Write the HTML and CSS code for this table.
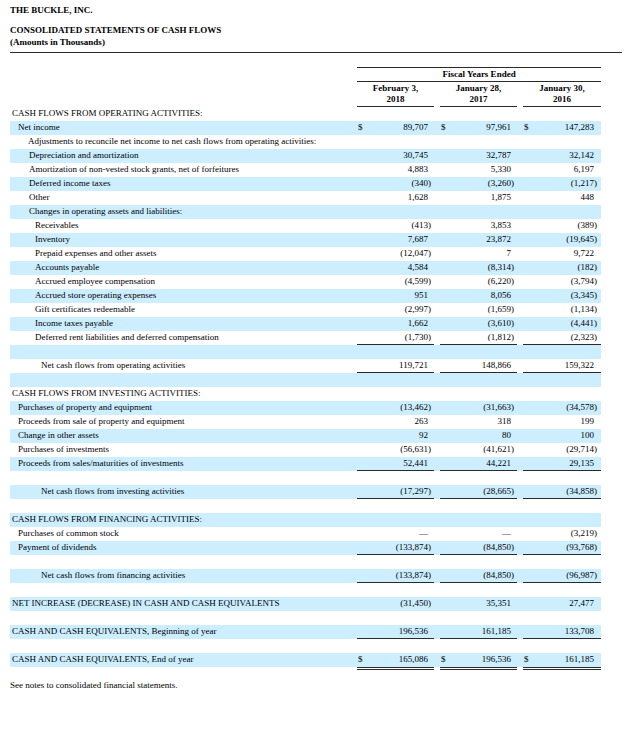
FILE: index.html
```html
<!DOCTYPE html>
<html lang="en">
<head>
<meta charset="utf-8">
<title>The Buckle, Inc. - Consolidated Statements of Cash Flows</title>
<link rel="stylesheet" href="styles.css">
</head>
<body>
<div class="page">
  <div class="company">THE BUCKLE, INC.</div>
  <div class="titles">
    <div>CONSOLIDATED STATEMENTS OF CASH FLOWS</div>
    <div>(Amounts in Thousands)</div>
  </div>

  <table class="cf">
    <colgroup>
      <col class="w-label">
      <col class="w-cur"><col class="w-num"><col class="w-par"><col class="w-gap">
      <col class="w-cur"><col class="w-num"><col class="w-par"><col class="w-gap">
      <col class="w-cur"><col class="w-num"><col class="w-par3">
    </colgroup>
    <thead>
      <tr>
        <td></td>
        <td colspan="11" class="fy">Fiscal Years Ended</td>
      </tr>
      <tr>
        <td></td>
        <td colspan="3" class="dt">February 3,<br>2018</td>
        <td></td>
        <td colspan="3" class="dt">January 28,<br>2017</td>
        <td></td>
        <td colspan="3" class="dt">January 30,<br>2016</td>
      </tr>
    </thead>
    <tbody>
      <tr><td class="l0">CASH FLOWS FROM OPERATING ACTIVITIES:</td><td colspan="11"></td></tr>
      <tr class="b"><td class="l1">Net income</td><td class="cur">$</td><td class="num">89,707</td><td class="par"></td><td></td><td class="cur">$</td><td class="num">97,961</td><td class="par"></td><td></td><td class="cur">$</td><td class="num">147,283</td><td class="par"></td></tr>
      <tr><td class="l2a">Adjustments to reconcile net income to net cash flows from operating activities:</td><td colspan="11"></td></tr>
      <tr class="b"><td class="l2">Depreciation and amortization</td><td class="cur"></td><td class="num">30,745</td><td class="par"></td><td></td><td class="cur"></td><td class="num">32,787</td><td class="par"></td><td></td><td class="cur"></td><td class="num">32,142</td><td class="par"></td></tr>
      <tr><td class="l2">Amortization of non-vested stock grants, net of forfeitures</td><td class="cur"></td><td class="num">4,883</td><td class="par"></td><td></td><td class="cur"></td><td class="num">5,330</td><td class="par"></td><td></td><td class="cur"></td><td class="num">6,197</td><td class="par"></td></tr>
      <tr class="b"><td class="l2">Deferred income taxes</td><td class="cur"></td><td class="num">(340</td><td class="par">)</td><td></td><td class="cur"></td><td class="num">(3,260</td><td class="par">)</td><td></td><td class="cur"></td><td class="num">(1,217</td><td class="par">)</td></tr>
      <tr><td class="l2">Other</td><td class="cur"></td><td class="num">1,628</td><td class="par"></td><td></td><td class="cur"></td><td class="num">1,875</td><td class="par"></td><td></td><td class="cur"></td><td class="num">448</td><td class="par"></td></tr>
      <tr class="b"><td class="l2">Changes in operating assets and liabilities:</td><td colspan="11"></td></tr>
      <tr><td class="l3">Receivables</td><td class="cur"></td><td class="num">(413</td><td class="par">)</td><td></td><td class="cur"></td><td class="num">3,853</td><td class="par"></td><td></td><td class="cur"></td><td class="num">(389</td><td class="par">)</td></tr>
      <tr class="b"><td class="l3">Inventory</td><td class="cur"></td><td class="num">7,687</td><td class="par"></td><td></td><td class="cur"></td><td class="num">23,872</td><td class="par"></td><td></td><td class="cur"></td><td class="num">(19,645</td><td class="par">)</td></tr>
      <tr><td class="l3">Prepaid expenses and other assets</td><td class="cur"></td><td class="num">(12,047</td><td class="par">)</td><td></td><td class="cur"></td><td class="num">7</td><td class="par"></td><td></td><td class="cur"></td><td class="num">9,722</td><td class="par"></td></tr>
      <tr class="b"><td class="l3">Accounts payable</td><td class="cur"></td><td class="num">4,584</td><td class="par"></td><td></td><td class="cur"></td><td class="num">(8,314</td><td class="par">)</td><td></td><td class="cur"></td><td class="num">(182</td><td class="par">)</td></tr>
      <tr><td class="l3">Accrued employee compensation</td><td class="cur"></td><td class="num">(4,599</td><td class="par">)</td><td></td><td class="cur"></td><td class="num">(6,220</td><td class="par">)</td><td></td><td class="cur"></td><td class="num">(3,794</td><td class="par">)</td></tr>
      <tr class="b"><td class="l3">Accrued store operating expenses</td><td class="cur"></td><td class="num">951</td><td class="par"></td><td></td><td class="cur"></td><td class="num">8,056</td><td class="par"></td><td></td><td class="cur"></td><td class="num">(3,345</td><td class="par">)</td></tr>
      <tr><td class="l3">Gift certificates redeemable</td><td class="cur"></td><td class="num">(2,997</td><td class="par">)</td><td></td><td class="cur"></td><td class="num">(1,659</td><td class="par">)</td><td></td><td class="cur"></td><td class="num">(1,134</td><td class="par">)</td></tr>
      <tr class="b"><td class="l3">Income taxes payable</td><td class="cur"></td><td class="num">1,662</td><td class="par"></td><td></td><td class="cur"></td><td class="num">(3,610</td><td class="par">)</td><td></td><td class="cur"></td><td class="num">(4,441</td><td class="par">)</td></tr>
      <tr class="u"><td class="l3">Deferred rent liabilities and deferred compensation</td><td class="cur"></td><td class="num">(1,730</td><td class="par">)</td><td></td><td class="cur"></td><td class="num">(1,812</td><td class="par">)</td><td></td><td class="cur"></td><td class="num">(2,323</td><td class="par">)</td></tr>
      <tr class="b"><td colspan="12"></td></tr>
      <tr class="u"><td class="lt">Net cash flows from operating activities</td><td class="cur"></td><td class="num">119,721</td><td class="par"></td><td></td><td class="cur"></td><td class="num">148,866</td><td class="par"></td><td></td><td class="cur"></td><td class="num">159,322</td><td class="par"></td></tr>
      <tr class="b"><td colspan="12"></td></tr>
      <tr><td class="l0">CASH FLOWS FROM INVESTING ACTIVITIES:</td><td colspan="11"></td></tr>
      <tr class="b"><td class="l1">Purchases of property and equipment</td><td class="cur"></td><td class="num">(13,462</td><td class="par">)</td><td></td><td class="cur"></td><td class="num">(31,663</td><td class="par">)</td><td></td><td class="cur"></td><td class="num">(34,578</td><td class="par">)</td></tr>
      <tr><td class="l1">Proceeds from sale of property and equipment</td><td class="cur"></td><td class="num">263</td><td class="par"></td><td></td><td class="cur"></td><td class="num">318</td><td class="par"></td><td></td><td class="cur"></td><td class="num">199</td><td class="par"></td></tr>
      <tr class="b"><td class="l1">Change in other assets</td><td class="cur"></td><td class="num">92</td><td class="par"></td><td></td><td class="cur"></td><td class="num">80</td><td class="par"></td><td></td><td class="cur"></td><td class="num">100</td><td class="par"></td></tr>
      <tr><td class="l1">Purchases of investments</td><td class="cur"></td><td class="num">(56,631</td><td class="par">)</td><td></td><td class="cur"></td><td class="num">(41,621</td><td class="par">)</td><td></td><td class="cur"></td><td class="num">(29,714</td><td class="par">)</td></tr>
      <tr class="b u"><td class="l1">Proceeds from sales/maturities of investments</td><td class="cur"></td><td class="num">52,441</td><td class="par"></td><td></td><td class="cur"></td><td class="num">44,221</td><td class="par"></td><td></td><td class="cur"></td><td class="num">29,135</td><td class="par"></td></tr>
      <tr><td colspan="12"></td></tr>
      <tr class="b u"><td class="lt">Net cash flows from investing activities</td><td class="cur"></td><td class="num">(17,297</td><td class="par">)</td><td></td><td class="cur"></td><td class="num">(28,665</td><td class="par">)</td><td></td><td class="cur"></td><td class="num">(34,858</td><td class="par">)</td></tr>
      <tr><td colspan="12"></td></tr>
      <tr class="b"><td class="l0">CASH FLOWS FROM FINANCING ACTIVITIES:</td><td colspan="11"></td></tr>
      <tr><td class="l1">Purchases of common stock</td><td class="cur"></td><td class="num dash">—</td><td class="par"></td><td></td><td class="cur"></td><td class="num dash">—</td><td class="par"></td><td></td><td class="cur"></td><td class="num">(3,219</td><td class="par">)</td></tr>
      <tr class="b u"><td class="l1">Payment of dividends</td><td class="cur"></td><td class="num">(133,874</td><td class="par">)</td><td></td><td class="cur"></td><td class="num">(84,850</td><td class="par">)</td><td></td><td class="cur"></td><td class="num">(93,768</td><td class="par">)</td></tr>
      <tr><td colspan="12"></td></tr>
      <tr class="b u"><td class="lt">Net cash flows from financing activities</td><td class="cur"></td><td class="num">(133,874</td><td class="par">)</td><td></td><td class="cur"></td><td class="num">(84,850</td><td class="par">)</td><td></td><td class="cur"></td><td class="num">(96,987</td><td class="par">)</td></tr>
      <tr><td colspan="12"></td></tr>
      <tr class="b"><td class="l0">NET INCREASE (DECREASE) IN CASH AND CASH EQUIVALENTS</td><td class="cur"></td><td class="num">(31,450</td><td class="par">)</td><td></td><td class="cur"></td><td class="num">35,351</td><td class="par"></td><td></td><td class="cur"></td><td class="num">27,477</td><td class="par"></td></tr>
      <tr><td colspan="12"></td></tr>
      <tr class="b u"><td class="l0">CASH AND CASH EQUIVALENTS, Beginning of year</td><td class="cur"></td><td class="num">196,536</td><td class="par"></td><td></td><td class="cur"></td><td class="num">161,185</td><td class="par"></td><td></td><td class="cur"></td><td class="num">133,708</td><td class="par"></td></tr>
      <tr><td colspan="12"></td></tr>
      <tr class="b"><td class="l0">CASH AND CASH EQUIVALENTS, End of year</td><td class="cur">$</td><td class="num">165,086</td><td class="par"></td><td></td><td class="cur">$</td><td class="num">196,536</td><td class="par"></td><td></td><td class="cur">$</td><td class="num">161,185</td><td class="par"></td></tr>
      <tr class="rule"><td></td><td colspan="3" class="dbl"></td><td></td><td colspan="3" class="dbl"></td><td></td><td colspan="3" class="dbl"></td></tr>
    </tbody>
  </table>

  <p class="note">See notes to consolidated financial statements.</p>
</div>
</body>
</html>
```

FILE: styles.css
```css
html, body {
  margin: 0;
  padding: 0;
  background: #ffffff;
}

body {
  font-family: "Liberation Serif", "Times New Roman", serif;
  font-size: 9px;
  color: #000000;
}

.page {
  padding: 4px 12px 0 10px;
}

.company {
  font-weight: bold;
  line-height: 12px;
}

.titles {
  margin-top: 8px;
  padding-bottom: 4px;
  font-weight: bold;
  line-height: 12px;
  border-bottom: 1px solid #2a2a2a;
}

.cf {
  margin-top: 14px;
  width: 591px;
  table-layout: fixed;
  border-collapse: separate;
  border-spacing: 0;
}

.cf td {
  padding: 0;
  white-space: nowrap;
}

.w-label { width: 347px; }
.w-cur { width: 10px; }
.w-num { width: 61px; }
.w-par { width: 6px; }
.w-par3 { width: 7px; }
.w-gap { width: 6px; }

.fy {
  font-weight: bold;
  text-align: center;
  line-height: 13px;
  border-top: 1px solid #2a2a2a;
  border-bottom: 1px solid #2a2a2a;
}

.dt {
  font-weight: bold;
  text-align: center;
  line-height: 11px;
  padding: 1px 0 2px !important;
  background-image: linear-gradient(#2a2a2a, #2a2a2a);
  background-size: 100% 1px;
  background-position: 0 100%;
  background-repeat: no-repeat;
}

.cf tbody td {
  height: 13px;
  line-height: 13px;
  padding-bottom: 1px;
}

.cf tbody tr.b td {
  background-color: #cceeff;
}

.l0 { padding-left: 2px !important; }
.l1 { padding-left: 8px !important; }
.l2a { padding-left: 18px !important; }
.l2 { padding-left: 19px !important; }
.l3 { padding-left: 25px !important; }
.lt { padding-left: 31px !important; }

.cur {
  text-align: left;
  padding-left: 1px !important;
}

.num {
  text-align: right;
}

.dash {
  color: #555555;
}

.par {
  text-align: left;
}

.cf tr.u td.cur,
.cf tr.u td.num,
.cf tr.u td.par {
  background-image: linear-gradient(#2a2a2a, #2a2a2a);
  background-size: 100% 1px;
  background-position: 0 100%;
  background-repeat: no-repeat;
}

/* double rule under the final totals */
.cf tbody tr.rule td {
  height: 1px;
  line-height: 0;
  font-size: 0;
  padding: 0;
}

.cf tbody tr.rule td.dbl {
  border-top: 1px solid #2a2a2a;
  border-bottom: 1px solid #2a2a2a;
}

.note {
  margin: 9px 0 0;
  line-height: 12px;
}
```
